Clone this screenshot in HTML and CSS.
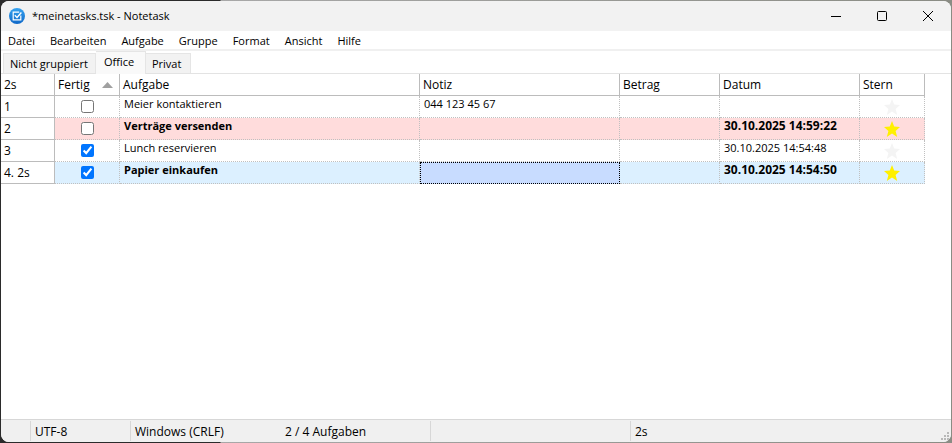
FILE: index.html
```html
<!DOCTYPE html>
<html lang="de">
<head>
    <meta charset="UTF-8">
    <meta name="viewport" content="width=device-width, initial-scale=1.0">
    <title>*meinetasks.tsk - Notetask</title>
    <link rel="stylesheet" href="styles.css">
</head>
<body>

    <div class="window">
        <header class="titlebar">
            <svg class="app-icon" width="16" height="16" viewBox="0 0 16 16">
                <defs>
                    <linearGradient id="disc" x1="0" y1="0" x2="0" y2="1">
                        <stop offset="0" stop-color="#36a3f0"/>
                        <stop offset="1" stop-color="#0f68c8"/>
                    </linearGradient>
                </defs>
                <circle cx="8" cy="8" r="8" fill="url(#disc)"/>
                <path d="M11.8 7.5v4.3H4.2V4.2h6" fill="none" stroke="#fff" stroke-width="1.2"/>
                <path d="M5.8 7.3l2.2 2.2 4.4-5" fill="none" stroke="#fff" stroke-width="1.4"/>
            </svg>
            <h1 class="title">*meinetasks.tsk - Notetask</h1>
            <div class="window-buttons">
                <button type="button" aria-label="Minimieren">
                    <svg width="10" height="10" viewBox="0 0 10 10"><path d="M0 5.5h10" stroke="#000"/></svg>
                </button>
                <button type="button" aria-label="Maximieren">
                    <svg width="10" height="10" viewBox="0 0 10 10"><rect x="0.5" y="0.5" width="9" height="9" rx="1" fill="none" stroke="#000"/></svg>
                </button>
                <button type="button" aria-label="Schliessen">
                    <svg width="10" height="10" viewBox="0 0 10 10"><path d="M0 0l10 10M10 0L0 10" stroke="#000"/></svg>
                </button>
            </div>
        </header>

        <nav class="menubar">
            <button type="button">Datei</button>
            <button type="button">Bearbeiten</button>
            <button type="button">Aufgabe</button>
            <button type="button">Gruppe</button>
            <button type="button">Format</button>
            <button type="button">Ansicht</button>
            <button type="button">Hilfe</button>
        </nav>

        <div class="tabs" role="tablist">
            <button type="button" class="tab" role="tab" aria-selected="false">Nicht gruppiert</button>
            <button type="button" class="tab active" role="tab" aria-selected="true">Office</button>
            <button type="button" class="tab" role="tab" aria-selected="false">Privat</button>
        </div>

        <main class="content">
            <table class="tasks">
                <colgroup>
                    <col class="col-number">
                    <col class="col-done">
                    <col class="col-task">
                    <col class="col-note">
                    <col class="col-amount">
                    <col class="col-date">
                    <col class="col-star">
                </colgroup>
                <thead>
                    <tr>
                        <th>2s</th>
                        <th>
                            <div class="sorted">Fertig
                                <svg width="11" height="6" viewBox="0 0 11 6"><path d="M5.5 0L11 6H0z" fill="#a0a0a0"/></svg>
                            </div>
                        </th>
                        <th>Aufgabe</th>
                        <th>Notiz</th>
                        <th>Betrag</th>
                        <th>Datum</th>
                        <th>Stern</th>
                    </tr>
                </thead>
                <tbody>
                    <tr>
                        <th>1</th>
                        <td class="done"><input type="checkbox" aria-label="Meier kontaktieren"></td>
                        <td>Meier kontaktieren</td>
                        <td>044 123 45 67</td>
                        <td></td>
                        <td class="date"></td>
                        <td class="star"><svg width="16" height="16" viewBox="0 0 16 16"><path d="M8 0l2.2 5.6L16 6l-4.4 4 1.6 6L8 12.6 2.8 16l1.6-6L0 6l5.8-.4z"/></svg></td>
                    </tr>
                    <tr class="overdue">
                        <th>2</th>
                        <td class="done"><input type="checkbox" aria-label="Verträge versenden"></td>
                        <td>Verträge versenden</td>
                        <td></td>
                        <td></td>
                        <td class="date">30.10.2025 14:59:22</td>
                        <td class="star on"><svg width="16" height="16" viewBox="0 0 16 16"><path d="M8 0l2.2 5.6L16 6l-4.4 4 1.6 6L8 12.6 2.8 16l1.6-6L0 6l5.8-.4z"/></svg></td>
                    </tr>
                    <tr>
                        <th>3</th>
                        <td class="done"><input type="checkbox" aria-label="Lunch reservieren" checked></td>
                        <td>Lunch reservieren</td>
                        <td></td>
                        <td></td>
                        <td class="date">30.10.2025 14:54:48</td>
                        <td class="star"><svg width="16" height="16" viewBox="0 0 16 16"><path d="M8 0l2.2 5.6L16 6l-4.4 4 1.6 6L8 12.6 2.8 16l1.6-6L0 6l5.8-.4z"/></svg></td>
                    </tr>
                    <tr class="selected">
                        <th>4. 2s</th>
                        <td class="done"><input type="checkbox" aria-label="Papier einkaufen" checked></td>
                        <td>Papier einkaufen</td>
                        <td class="focused"></td>
                        <td></td>
                        <td class="date">30.10.2025 14:54:50</td>
                        <td class="star on"><svg width="16" height="16" viewBox="0 0 16 16"><path d="M8 0l2.2 5.6L16 6l-4.4 4 1.6 6L8 12.6 2.8 16l1.6-6L0 6l5.8-.4z"/></svg></td>
                    </tr>
                </tbody>
            </table>
        </main>

        <footer class="statusbar">
            <span class="panel panel-state"></span>
            <span class="panel panel-encoding">UTF-8</span>
            <span class="panel panel-lines">Windows (CRLF)</span>
            <span class="panel panel-count">2 / 4 Aufgaben</span>
            <span class="panel panel-empty"></span>
            <span class="panel panel-sum">2s</span>
            <svg class="grip" width="8" height="8" viewBox="0 0 8 8" fill="#b8b8b8">
                <path d="M6 0h2v2H6zM3 3h2v2H3zM6 3h2v2H6zM0 6h2v2H0zM3 6h2v2H3zM6 6h2v2H6z"/>
            </svg>
        </footer>
    </div>

</body>
</html>
```

FILE: styles.css
```css
* {
    box-sizing: border-box;
}

body {
    margin: 0;
    padding: 1px;
    min-height: 100vh;
    display: flex;
    background: linear-gradient(90deg, #2b2b2b 0, #2b2b2b 220px, #a8a8a8 221px, #8a8c84 100%);
    font-family: "Open Sans", "Noto Sans", sans-serif;
    font-size: 12px;
    line-height: 16px;
    color: #000;
}

button {
    font: inherit;
    color: inherit;
    border: none;
    background: none;
    padding: 0;
}

.window {
    flex: 1;
    display: flex;
    flex-direction: column;
    background: #fff;
    border-radius: 8px;
    overflow: hidden;
}

.titlebar {
    display: flex;
    align-items: center;
    height: 30px;
    padding-left: 8px;
    background: #f2f2f2;
}

.title {
    flex: 1;
    margin: 0 0 0 7px;
    font-size: 11px;
    font-weight: normal;
}

.window-buttons {
    display: flex;
}

.window-buttons button {
    display: flex;
    align-items: center;
    justify-content: center;
    width: 46px;
    height: 30px;
}

.menubar {
    display: flex;
    gap: 15px;
    height: 20px;
    padding: 1px 0 0 7px;
    border-bottom: 2px solid #f0f0f0;
    font-size: 11px;
}

.tabs {
    display: flex;
    align-items: flex-end;
    height: 23px;
    padding-left: 2px;
    border-bottom: 1px solid #e3e3e3;
    font-size: 11px;
}

.tab {
    height: 20px;
    min-width: 45px;
    padding: 0 7px 0 6px;
    background: #f2f2f2;
    border: 1px solid #e5e5e5;
    border-width: 1px 1px 0 0;
    text-align: left;
}

.tab:first-child {
    border-left-width: 1px;
}

.tab.active {
    height: 23px;
    min-width: 50px;
    margin-bottom: -1px;
    padding: 0 8px 3px;
    background: #f9f9f9;
}

.content {
    flex: 1;
}

.tasks {
    table-layout: fixed;
    width: 924px;
    border-collapse: separate;
    border-spacing: 0;
}

.col-number { width: 54px; }
.col-done { width: 65px; }
.col-task { width: 300px; }
.col-note { width: 200px; }
.col-amount { width: 100px; }
.col-date { width: 140px; }
.col-star { width: 65px; }

.tasks th {
    height: 22px;
    padding: 0 3px;
    border: 1px solid #bcbcbc;
    border-width: 0 1px 1px 0;
    font-weight: normal;
    text-align: left;
    white-space: nowrap;
}

.tasks td {
    height: 22px;
    padding: 0 4px 5px;
    border: 1px dotted #c0c0c0;
    border-width: 0 1px 1px 0;
    font-size: 11px;
    white-space: nowrap;
}

.sorted {
    display: flex;
    align-items: center;
    justify-content: space-between;
    padding-right: 3px;
}

.tasks .done,
.tasks .star {
    padding: 0;
    text-align: center;
}

.done input {
    display: block;
    width: 13px;
    height: 13px;
    margin: 0 auto;
}

.star svg {
    display: block;
    margin: 0 auto;
    fill: #f4f4f4;
}

.star.on svg {
    fill: #fff000;
}

.overdue td,
.selected td {
    font-weight: bold;
}

.overdue .date,
.selected .date {
    font-size: 12px;
}

.overdue td {
    background: #ffdcdc;
}

.selected td {
    background: #dcf0ff;
}

.selected .focused {
    background: #c8dcff;
    outline: 1px dotted #000;
    outline-offset: -1px;
}

.statusbar {
    display: flex;
    height: 23px;
    padding: 1px 0;
    background: #f0f0f0;
    border-top: 1px solid #d7d7d7;
}

.panel {
    padding: 3px 4px 0;
    border-right: 1px solid #d7d7d7;
}

.panel-state { width: 30px; }
.panel-encoding { width: 100px; }
.panel-lines { width: 150px; border-right: none; }
.panel-count { width: 150px; }
.panel-empty { width: 200px; }
.panel-sum { flex: 1; border-right: none; }

.grip {
    align-self: flex-end;
    margin: 0 2px 1px 0;
}
```
